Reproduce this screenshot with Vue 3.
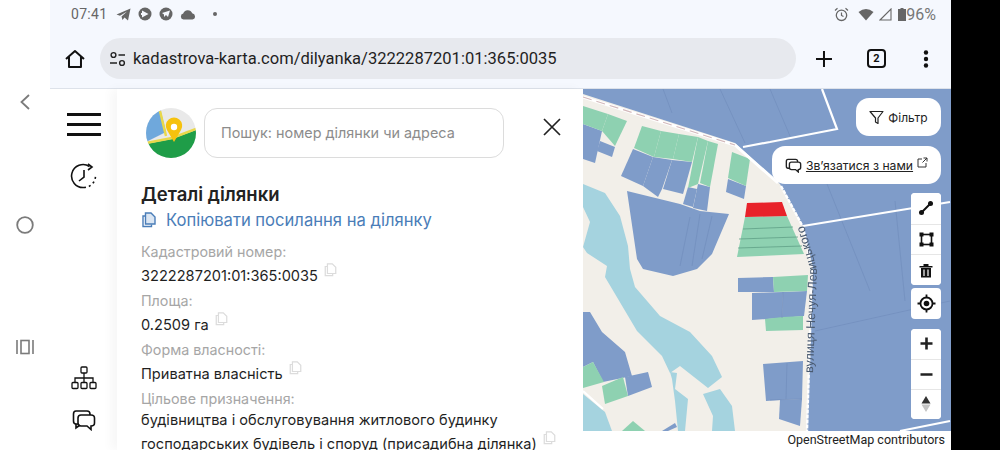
<script setup>
const blues = [
  '583,123 602,130 595,162 583,158','600,140 615,146 612,156 597,150',
  '633,148 653,156 643,185 621,175','653,156 672,159 662,188 658,196 643,185','672,159 692,161 683,193 663,188',
  '688,186 697,188 693,206 683,203','698,183 710,186 707,210 693,207','728,178 746,185 744,198 726,191',
  '627,190 680,203 700,210 729,213 712,253 697,268 673,275 643,268 637,258',
  '738,277 773,276 774,291 738,291','752,292 783,291 782,317 752,319','783,291 807,290 804,315 782,317',
  '763,363 803,360 802,398 780,399 766,400','780,399 802,398 800,425 779,418',
  '583,311 590,311 602,331 625,351 632,375 603,381 593,361 583,366','625,376 648,371 652,386 628,395','662,430 675,422 677,426 668,430'
]
const greens = [
  '583,105 608,113 602,130 583,123','608,113 627,120 615,145 602,130',
  '642,125 661,130 654,156 634,147','661,130 679,133 673,158 654,156','679,133 698,136 692,161 673,158',
  '698,136 708,140 698,183 688,187 693,161','708,140 718,143 710,186 700,182','732,151 750,158 746,185 728,177',
  '745,216 787,215 804,253 737,256','773,276 808,274 807,290 774,291','765,318 783,316 803,315 803,329 766,330',
  '583,366 593,361 604,381 583,387','602,385 623,376 628,395 605,403','622,430 633,420 645,430'
]
const waters = [
  '583,183 605,192 620,215 628,245 630,268 635,286 660,315 690,331 712,355 722,376 708,387 680,365 670,372 662,355 637,330 605,276 607,265 587,252 583,246 590,221 583,206',
  '670,371 677,372 675,388 688,398 685,430 678,430 675,400 672,378',
  '703,393 720,388 732,405 735,430 712,430 713,415',
  '583,393 605,411 612,430 583,430'
]
const faint = [
  'M663,88 L672,112','M720,88 L745,142','M770,88 L790,135','M825,178 L870,290','M815,330 L950,300','M895,200 L905,300',
  'M690,216 L680,265','M700,213 L692,265','M712,215 L702,258','M783,291 L782,317','M787,362 L786,398','M770,399 L802,398'
]
const greenLines = ['M743,228 L793,226','M739,238 L798,236','M738,247 L802,245']
const details = [
  { label: 'Кадастровий номер:', value: '3222287201:01:365:0035' },
  { label: 'Площа:', value: '0.2509 га' },
  { label: 'Форма власності:', value: 'Приватна власність' },
]
</script>

<template>
  <div class="screen">
    <nav class="sysnav">
      <svg width="16" height="20" viewBox="0 0 16 20"><path d="M12 3 L4.500 10 L12 17" fill="none" stroke="#7b7b7b" stroke-width="1.800"/></svg>
      <svg width="20" height="20" viewBox="0 0 20 20"><circle cx="10" cy="10" r="7.800" fill="none" stroke="#7b7b7b" stroke-width="1.800"/></svg>
      <svg width="20" height="18" viewBox="0 0 20 18"><path d="M2 2V16M18 2V16" stroke="#7b7b7b" stroke-width="1.600"/><rect x="6" y="2.500" width="8" height="13" fill="none" stroke="#7b7b7b" stroke-width="1.600"/></svg>
    </nav>

    <div class="browser">
      <header class="status">
        <div class="status-left">
          <span class="time">07:41</span>
          <svg width="15" height="13" viewBox="0 0 15 13"><path d="M0.500 6.500 L14.500 0.500 L12 12.500 L8.500 9.500 L6.500 12 L5.500 8.500 L11 3.500 L4 7.800Z" fill="#666"/></svg>
          <svg class="round" width="14" height="14" viewBox="0 0 14 14"><circle cx="7" cy="7" r="6.500" fill="#666"/><path d="M4 3.500 L10.500 7 L4 10.500Z M3 6H7V8H3Z" fill="#f5f8fe"/></svg>
          <svg class="round" width="14" height="14" viewBox="0 0 14 14"><circle cx="7" cy="7" r="6.500" fill="#666"/><path d="M3 6 L11 3.500 L9 10 L7 8 L5 10V7.500Z" fill="#f5f8fe"/></svg>
          <svg width="16" height="11" viewBox="0 0 16 11"><path d="M3.500 10.500 A3 3 0 0 1 3.200 4.600 A4.800 4.800 0 0 1 12.200 4.200 A3.200 3.200 0 0 1 12.500 10.500Z" fill="#666"/></svg>
          <span class="dot"></span>
        </div>
        <div class="status-right">
          <svg width="15" height="15" viewBox="0 0 15 15"><circle cx="7.500" cy="8.300" r="5.200" fill="none" stroke="#666" stroke-width="1.300"/><path d="M7.500 5.500V8.500L9.500 9.500M1 3.500L3.500 1.300M14 3.500L11.500 1.300" fill="none" stroke="#666" stroke-width="1.200"/></svg>
          <svg class="wifi" width="16" height="13" viewBox="0 0 16 13"><path d="M0.500 4 Q8 -2 15.500 4 L8 12.500Z" fill="#666"/></svg>
          <svg class="signal" width="13" height="13" viewBox="0 0 13 13"><path d="M1 12 L12 1 V12Z" fill="none" stroke="#666" stroke-width="1.100"/></svg>
          <svg class="batt" width="8" height="13" viewBox="0 0 8 13"><path d="M2.500 0H5.500V1H8V13H0V1H2.500Z" fill="#666"/></svg>
          <span class="pct">96%</span>
        </div>
      </header>

      <div class="toolbar">
        <svg class="home" width="22" height="22" viewBox="0 0 22 22"><path d="M2 11 L11 3 L20 11 M5 9V19H17V9" fill="none" stroke="#111" stroke-width="2" stroke-linejoin="round"/></svg>
        <div class="urlbar">
          <svg width="18" height="16" viewBox="0 0 18 16"><circle cx="4.500" cy="4" r="2.400" fill="none" stroke="#222" stroke-width="1.400"/><path d="M9.500 4H16M1 12H8" stroke="#222" stroke-width="1.500"/><circle cx="13" cy="12" r="2.400" fill="none" stroke="#222" stroke-width="1.400"/></svg>
          <span class="url">kadastrova-karta.com/dilyanka/3222287201:01:365:0035</span>
        </div>
        <svg class="plus" width="18" height="18" viewBox="0 0 18 18"><path d="M9 1V17M1 9H17" stroke="#111" stroke-width="2"/></svg>
        <span class="tabs">2</span>
        <svg class="menu" width="6" height="18" viewBox="0 0 6 18"><circle cx="3" cy="2.500" r="2.200" fill="#111"/><circle cx="3" cy="9" r="2.200" fill="#111"/><circle cx="3" cy="15.500" r="2.200" fill="#111"/></svg>
      </div>

      <main class="content">
        <aside class="rail">
          <div class="rail-top">
            <div class="burger"><i></i><i></i><i></i></div>
            <svg width="28" height="28" viewBox="0 0 28 28"><path d="M19.500 4.500 A11.500 11.500 0 1 0 14 25.500" fill="none" stroke="#111" stroke-width="1.600"/><path d="M14 25.500 A11.500 11.500 0 0 0 25.500 14" fill="none" stroke="#111" stroke-width="1.600" stroke-dasharray="2 3"/><path d="M14 8V15L9 19" fill="none" stroke="#111" stroke-width="1.600"/><path d="M18 2 L22 5 L18 8" fill="none" stroke="#111" stroke-width="1.600"/></svg>
          </div>
          <div class="rail-bottom">
            <svg width="26" height="24" viewBox="0 0 26 24"><rect x="10" y="1" width="6" height="6" rx="1" fill="none" stroke="#111" stroke-width="1.300"/><path d="M13 7V12M4 16V12H22V16M13 12V16" fill="none" stroke="#111" stroke-width="1.300"/><rect x="1" y="16.500" width="6" height="6" rx="1" fill="none" stroke="#111" stroke-width="1.300"/><rect x="10" y="16.500" width="6" height="6" rx="1" fill="none" stroke="#111" stroke-width="1.300"/><rect x="19" y="16.500" width="6" height="6" rx="1" fill="none" stroke="#111" stroke-width="1.300"/></svg>
            <svg width="24" height="22" viewBox="0 0 24 22"><path d="M6 15 H4 Q1.500 15 1.500 12 V5 Q1.500 2 4 2 H15 Q18 2 18 5 V6" fill="none" stroke="#111" stroke-width="1.600"/><path d="M9 6 H19 Q22.500 6 22.500 9 V14 Q22.500 17 19 17 V20.500 L15 17 H9 Q6 17 6 14 V9 Q6 6 9 6Z" fill="none" stroke="#111" stroke-width="1.600"/><path d="M4 15 V19 L8 16" fill="none" stroke="#111" stroke-width="1.600"/></svg>
          </div>
        </aside>

        <section class="panel">
          <div class="search-row">
            <svg class="logo" width="50" height="50" viewBox="0 0 50 50">
              <defs><clipPath id="lc"><circle cx="25" cy="25" r="25"/></clipPath></defs>
              <g clip-path="url(#lc)">
                <rect width="50" height="50" fill="#e9e9e9"/>
                <path d="M0 0H14L20 24 L0 34Z" fill="#6fa8dc"/>
                <path d="M0 36 L26 31 L50 22 V50 H0Z" fill="#1f9d48"/>
                <path d="M0 35 L26 30 L50 21 M14 3 L20 28" fill="none" stroke="#e9d84a" stroke-width="2.500"/>
              </g>
              <path d="M28 34 L21 22 A8.200 8.200 0 1 1 35 22Z" fill="#f6c20e"/>
              <circle cx="28" cy="19" r="3.200" fill="#fff"/>
            </svg>
            <div class="search">Пошук: номер ділянки чи адреса</div>
            <svg class="close" width="18" height="18" viewBox="0 0 18 18"><path d="M1 1L17 17M17 1L1 17" stroke="#222" stroke-width="1.700"/></svg>
          </div>

          <h1 class="title">Деталі ділянки</h1>
          <a class="copy-link">
            <svg width="14" height="16" viewBox="0 0 14 16"><path d="M3 4H1V14.500H9.500V12.500" fill="none" stroke="#4a7db8" stroke-width="1.400"/><path d="M3.500 1H9L13 5V12H3.500Z" fill="#dbe6f3" stroke="#4a7db8" stroke-width="1.400"/></svg>
            <span>Копіювати посилання на ділянку</span>
          </a>

          <dl class="details">
            <div v-for="d in details" :key="d.label" class="item">
              <dt>{{ d.label }}</dt>
              <dd>{{ d.value }}
                <svg class="mini" width="13" height="14" viewBox="0 0 14 16"><path d="M3 4H1V14.500H9.500V12.500" fill="none" stroke="#dcdcdc" stroke-width="1.400"/><path d="M3.500 1H9L13 5V12H3.500Z" fill="none" stroke="#dcdcdc" stroke-width="1.400"/></svg>
              </dd>
            </div>
            <div class="item">
              <dt>Цільове призначення:</dt>
              <dd class="long">будівництва і обслуговування житлового будинку<br>господарських будівель і споруд (присадибна ділянка)
                <svg class="mini" width="13" height="14" viewBox="0 0 14 16"><path d="M3 4H1V14.500H9.500V12.500" fill="none" stroke="#dcdcdc" stroke-width="1.400"/><path d="M3.500 1H9L13 5V12H3.500Z" fill="none" stroke="#dcdcdc" stroke-width="1.400"/></svg>
              </dd>
            </div>
          </dl>
        </section>

        <div class="map-col">
          <div class="map">
            <svg class="map-svg" width="368" height="342" viewBox="583 88 368 342">
              <defs><filter id="soft" x="-5%" y="-5%" width="110%" height="110%"><feGaussianBlur stdDeviation="0.400"/></filter></defs>
              <g filter="url(#soft)">
                <rect x="583" y="88" width="368" height="342" fill="#7f9cc9"/>
                <polygon points="583,93 735,142 780,183 803,225 813,268 807,430 583,430" fill="#f2efe9"/>
                <polygon v-for="(p,i) in waters" :key="'w'+i" :points="p" fill="#a5d3df"/>
                <polygon v-for="(p,i) in blues" :key="'b'+i" :points="p" fill="#7f9cc9"/>
                <polygon v-for="(p,i) in greens" :key="'g'+i" :points="p" fill="#8ed1b1"/>
                <polygon points="747,202 782,201 787,215 745,216" fill="#e8202a"/>
                <path v-for="(d,i) in faint" :key="'f'+i" :d="d" fill="none" stroke="#6f8cba" stroke-width="0.600"/>
                <path v-for="(d,i) in greenLines" :key="'l'+i" :d="d" fill="none" stroke="#5f9f86" stroke-width="0.800"/>
                <path d="M583,96 L735,144 L778,182" fill="none" stroke="#fff" stroke-width="3"/>
                <path d="M583,96 L735,144" fill="none" stroke="#d3b9bb" stroke-width="1.100" stroke-dasharray="9 5"/>
                <path d="M781,185 L803,226 L812,268 L807,430" fill="none" stroke="#fff" stroke-width="2.400" stroke-dasharray="4 1"/>
                <path d="M770,141 L837,128 L822,88M743,146 L770,141M803,225 L950,201M900,430 L950,420M583,390 L603,408" fill="none" stroke="#fff" stroke-width="2.200"/>
                <path id="street" d="M813,372 L817,268 L804,224" fill="none"/>
                <text font-size="12.500" fill="#4a5a70" font-family="'Liberation Sans',sans-serif"><textPath href="#street">вулиця Нечуя-Левицького</textPath></text>
              </g>
            </svg>

            <div class="controls">
              <button class="pill filter">
                <svg width="15" height="15" viewBox="0 0 15 15"><path d="M1 1.500H14L9 8V13.500L6.500 12V8Z" fill="none" stroke="#222" stroke-width="1.200" stroke-linejoin="round"/></svg>
                Фільтр
              </button>
              <button class="pill contact">
                <svg width="17" height="15" viewBox="0 0 24 22"><path d="M6 15 H4 Q1.500 15 1.500 12 V5 Q1.500 2 4 2 H15 Q18 2 18 5 V6" fill="none" stroke="#222" stroke-width="2"/><path d="M9 6 H19 Q22.500 6 22.500 9 V14 Q22.500 17 19 17 V20.500 L15 17 H9 Q6 17 6 14 V9 Q6 6 9 6Z" fill="none" stroke="#222" stroke-width="2"/></svg>
                <span class="contact-text">Зв’язатися з нами</span>
                <svg class="ext" width="11" height="11" viewBox="0 0 11 11"><path d="M5 2H1V10H9V6M5.500 5.500L10 1M6.500 1H10V4.500" fill="none" stroke="#333" stroke-width="1"/></svg>
              </button>
              <div class="group draw">
                <button><svg width="16" height="16" viewBox="0 0 16 16"><path d="M3.500 12.500L12.500 3.500" stroke="#111" stroke-width="2"/><circle cx="3.500" cy="12.500" r="2.500" fill="#111"/><circle cx="12.500" cy="3.500" r="2.500" fill="#111"/></svg></button>
                <button><svg width="15" height="15" viewBox="0 0 15 15"><rect x="2.500" y="2.500" width="10" height="10" fill="none" stroke="#111" stroke-width="1.600"/><rect x="0.500" y="0.500" width="4" height="4" fill="#111"/><rect x="10.500" y="0.500" width="4" height="4" fill="#111"/><rect x="0.500" y="10.500" width="4" height="4" fill="#111"/><rect x="10.500" y="10.500" width="4" height="4" fill="#111"/></svg></button>
                <button><svg width="14" height="15" viewBox="0 0 14 15"><path d="M0.500 3H13.500V4.500H0.500ZM4.500 1H9.500V3H4.500Z" fill="#111"/><path d="M2 5H12V14.500H2ZM5 6.500V13M7 6.500V13M9 6.500V13" fill="#111"/><path d="M5 6.500V13M9 6.500V13" stroke="#fff" stroke-width="1.200"/></svg></button>
              </div>
              <div class="group locate">
                <button><svg width="19" height="19" viewBox="0 0 19 19"><circle cx="9.500" cy="9.500" r="6" fill="none" stroke="#111" stroke-width="1.800"/><circle cx="9.500" cy="9.500" r="2.800" fill="#111"/><path d="M9.500 0.500V3.500M9.500 15.500V18.500M0.500 9.500H3.500M15.500 9.500H18.500" stroke="#111" stroke-width="1.800"/></svg></button>
              </div>
              <div class="group zoom">
                <button><svg width="13" height="13" viewBox="0 0 13 13"><path d="M6.500 0.500V12.500M0.500 6.500H12.500" stroke="#222" stroke-width="2.600"/></svg></button>
                <button><svg width="13" height="13" viewBox="0 0 13 13"><path d="M0.500 6.500H12.500" stroke="#222" stroke-width="2.600"/></svg></button>
                <button><svg width="10" height="18" viewBox="0 0 10 18"><path d="M5 1L9.500 8.500H0.500Z" fill="#333"/><path d="M5 17L9.500 9.500H0.500Z" fill="#c4c4c4"/></svg></button>
              </div>
            </div>
          </div>
          <div class="attrib">OpenStreetMap contributors</div>
        </div>
      </main>
    </div>

    <div class="bezel"></div>
  </div>
</template>

<style>
html, body { margin: 0; overflow: hidden; background: #fff; }
</style>

<style scoped>
.screen { display: flex; width: 1000px; height: 450px; overflow: hidden; background: #fff; font-family: Inter, "Liberation Sans", sans-serif; }
.sysnav { width: 50px; flex: none; display: flex; flex-direction: column; align-items: center; padding-top: 92px; gap: 103px; box-sizing: border-box; }
.browser { width: 901px; flex: none; display: flex; flex-direction: column; height: 450px; }
.bezel { flex: 1; background: #000; }

.status { height: 28px; flex: none; background: #f5f8fe; display: flex; justify-content: space-between; align-items: center; padding: 0 15px 1px 21px; color: #666; font-family: Roboto, sans-serif; }
.status-left, .status-right { display: flex; align-items: center; }
.status-left { gap: 7px; }
.status-right { gap: 3px; }
.time { font-size: 14px; letter-spacing: 0.300px; margin-right: 2px; }
.dot { width: 4px; height: 4px; border-radius: 50%; background: #666; margin-left: 10px; }
.wifi { margin-left: 6px; }
.signal { margin-left: 2px; }
.pct { font-size: 16px; letter-spacing: 0; color: #777; }
.batt { margin-left: 3px; margin-right: -3px; }

.toolbar { height: 60px; flex: none; box-sizing: border-box; background: #f5f8fe; border-bottom: 1px solid #dde2ea; display: flex; align-items: center; padding: 0 22px 0 14px; }
.urlbar { width: 697px; height: 41px; margin-left: 14px; box-sizing: border-box; border-radius: 21px; background: #e7e9ee; display: flex; align-items: center; gap: 6px; padding-left: 9px; }
.url { font-family: Roboto, sans-serif; font-size: 16.560px; color: #1f1f1f; }
.plus { margin-left: 19px; }
.tabs { margin-left: 34px; width: 15px; height: 15px; border: 2px solid #111; border-radius: 4px; font: 700 11px/15px Roboto, sans-serif; text-align: center; color: #111; }
.menu { margin-left: 37px; }

.content { flex: 1; min-height: 0; display: flex; }
.rail { width: 67px; flex: none; display: flex; flex-direction: column; justify-content: space-between; align-items: center; padding: 24px 0 19px; box-sizing: border-box; }
.rail-top { display: flex; flex-direction: column; align-items: center; gap: 26px; }
.rail-bottom { display: flex; flex-direction: column; align-items: center; gap: 19px; }
.burger { display: flex; flex-direction: column; gap: 7px; }
.burger i { display: block; width: 34px; height: 3px; background: #111; }

.panel { width: 466px; flex: none; box-sizing: border-box; padding: 19px 0 0 24px; background: #fff; box-shadow: -6px 0 10px rgba(0,0,0,.035); overflow: hidden; }
.search-row { display: flex; align-items: flex-start; }
.logo { flex: none; margin-left: 5px; }
.search { width: 300px; height: 50px; box-sizing: border-box; margin-left: 8px; border: 1px solid #dcdcdc; border-radius: 13px; padding-left: 16px; font-size: 14.400px; line-height: 48px; color: #8c8c8c; }
.close { margin: 10px 0 0 39px; }
.title { margin: 25px 0 0; font-size: 18.500px; font-weight: 600; line-height: 22px; color: #222; }
.copy-link { display: flex; align-items: center; gap: 10px; height: 24px; margin: 3px 0 0 1px; color: #4a7db8; font-size: 16.600px; }
.details { margin: 8px 0 0; }
.item dt { font-size: 14.300px; line-height: 24px; color: #a6a6a6; }
.item dd { margin: 0; font-size: 14.600px; line-height: 24px; height: 25px; color: #1f1f1f; white-space: nowrap; }
.item dd.long { height: auto; margin-top: -3px; }
.mini { margin: -6px 0 0 2px; vertical-align: 4px; }

.map-col { width: 368px; flex: none; display: flex; flex-direction: column; }
.map { position: relative; height: 342px; flex: none; overflow: hidden; }
.map-svg { display: block; }
.controls { position: absolute; top: 9px; right: 10px; display: flex; flex-direction: column; align-items: flex-end; }
.pill { display: flex; align-items: center; justify-content: center; background: #fff; border: 0; border-radius: 13px; font-family: Inter, sans-serif; color: #222; padding: 0; }
.filter { width: 85px; height: 38px; gap: 4px; font-size: 12px; }
.contact { width: 169px; height: 38px; gap: 4px; margin-top: 10px; font-size: 12.200px; }
.contact-text { text-decoration: underline; }
.ext { margin-top: -5px; }
.group { width: 30px; background: #fff; border-radius: 4px; overflow: hidden; }
.group button { display: flex; width: 30px; align-items: center; justify-content: center; background: #fff; border: 0; border-top: 1px solid #e6e6e6; padding: 0; height: 30px; }
.group button:first-child { border-top: 0; }
.draw { margin-top: 9px; }
.draw button { height: 30.670px; }
.locate { margin-top: 3px; }
.locate button { height: 31px; }
.zoom { margin-top: 10px; }

.attrib { flex: 1; text-align: right; padding-right: 6px; font-family: Roboto, sans-serif; font-size: 12.500px; line-height: 17px; color: #222; }
</style>
